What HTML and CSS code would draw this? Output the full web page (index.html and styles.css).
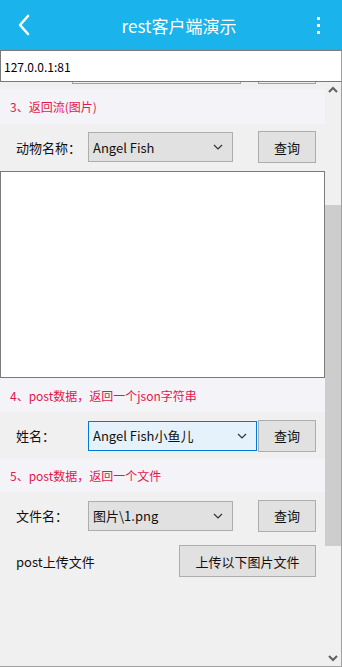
FILE: index.html
```html
<!DOCTYPE html>
<html lang="zh">
<head>
    <meta charset="UTF-8">
    <meta name="viewport" content="width=device-width, initial-scale=1.0">
    <title>rest客户端演示</title>
    <link rel="stylesheet" href="styles.css">
</head>
<body>
    <div class="topbar">
        <svg class="back" width="14" height="22" viewBox="0 0 14 22"><path d="M11 2 L3 11 L11 20" fill="none" stroke="#fff" stroke-width="2.6" stroke-linecap="round" stroke-linejoin="round"/></svg>
        <div class="title">rest客户端演示</div>
        <div class="dots"><span></span><span></span><span></span></div>
    </div>

    <div class="url">127.0.0.1:81</div>

    <div class="scroller">
        <div class="content">
            <div class="cutoff">
                <div class="cut-select"></div>
                <div class="cut-button"></div>
            </div>

            <div class="section s3">3、返回流(图片)</div>
            <div class="row r3">
                <div class="label">动物名称：</div>
                <div class="combo">Angel Fish
                    <svg width="10" height="6" viewBox="0 0 10 6"><path d="M1 1 L5 5 L9 1" fill="none" stroke="#333" stroke-width="1.2"/></svg>
                </div>
                <button class="button">查询</button>
            </div>
            <div class="picture"></div>

            <div class="section s4">4、post数据，返回一个json字符串</div>
            <div class="row r4">
                <div class="label">姓名：</div>
                <div class="combo combo-wide focused">Angel Fish小鱼儿
                    <svg width="10" height="6" viewBox="0 0 10 6"><path d="M1 1 L5 5 L9 1" fill="none" stroke="#333" stroke-width="1.2"/></svg>
                </div>
                <button class="button button-tight">查询</button>
            </div>

            <div class="section s5">5、post数据，返回一个文件</div>
            <div class="row r5">
                <div class="label">文件名：</div>
                <div class="combo">图片\1.png
                    <svg width="10" height="6" viewBox="0 0 10 6"><path d="M1 1 L5 5 L9 1" fill="none" stroke="#333" stroke-width="1.2"/></svg>
                </div>
                <button class="button">查询</button>
            </div>
            <div class="row upload">
                <div class="label label-free">post上传文件</div>
                <button class="button button-long">上传以下图片文件</button>
            </div>
        </div>

        <div class="scrollbar">
            <svg class="arrow" width="10" height="7" viewBox="0 0 10 7"><path d="M1 6 L5 2 L9 6" fill="none" stroke="#606060" stroke-width="2"/></svg>
            <div class="track"><div class="thumb"></div></div>
            <svg class="arrow" width="10" height="7" viewBox="0 0 10 7"><path d="M1 1 L5 5 L9 1" fill="none" stroke="#606060" stroke-width="2"/></svg>
        </div>
    </div>
</body>
</html>
```

FILE: styles.css
```css
body {
    margin: 0;
    width: 342px;
    height: 667px;
    background: #f0f0f0;
    font-family: "Noto Sans CJK SC", "Noto Sans", sans-serif;
    font-size: 13px;
    color: #111;
    overflow: hidden;
}
.topbar {
    height: 50px;
    background: #1ab3eb;
    display: flex;
    align-items: center;
    justify-content: space-between;
    padding: 0 22px 0 17px;
    color: white;
}
.title {
    font-size: 17px;
    margin-left: 10px;
}
.dots {
    display: flex;
    flex-direction: column;
    gap: 4px;
}
.dots span {
    width: 3px;
    height: 3px;
    background: white;
}
.url {
    height: 30px;
    background: white;
    border: 1px solid #7a7a7a;
    border-right-color: #a0a0a0;
    display: flex;
    align-items: center;
    padding-left: 3px;
    font-size: 12px;
    color: #000;
}
.scroller {
    height: 584px;
    display: flex;
    border-right: 1px solid #a0a0a0;
    border-bottom: 1px solid #a0a0a0;
}
.content {
    width: 325px;
    overflow: hidden;
}
.cutoff {
    height: 7px;
    position: relative;
}
.cut-select {
    position: absolute;
    left: 72px;
    top: 0;
    width: 167px;
    height: 1px;
    border: 1px solid #a0a0a0;
    border-top: none;
}
.cut-button {
    position: absolute;
    left: 258px;
    top: 0;
    width: 56px;
    height: 1px;
    border: 1px solid #a0a0a0;
    border-top: none;
}
.section {
    background: #f4f3f8;
    color: #e3174d;
    font-size: 12px;
    display: flex;
    align-items: center;
    padding-left: 10px;
}
.s3 { height: 35px; }
.s4 { height: 34px; }
.s5 { height: 33px; }
.row {
    display: flex;
    align-items: center;
    padding-left: 16px;
}
.r3 { height: 46px; }
.r4 { height: 47px; }
.r5 { height: 47px; }
.upload {
    height: 44px;
    padding-right: 9px;
}
.label {
    width: 72px;
    white-space: nowrap;
}
.label-free {
    width: auto;
    flex: 1;
}
.combo {
    height: 30px;
    background: #e1e1e1;
    border: 1px solid #adadad;
    display: flex;
    align-items: center;
    justify-content: space-between;
    padding: 0 9px 0 4px;
    box-sizing: border-box;
    width: 145px;
}
.combo-wide { width: 169px; }
.focused {
    background: #e5f1fb;
    border-color: #0078d7;
}
.button {
    font-family: inherit;
    font-size: 13px;
    color: #111;
    background: #e1e1e1;
    border: 1px solid #adadad;
    height: 32px;
    width: 58px;
    margin-left: 25px;
    padding: 0;
}
.button-tight { margin-left: 1px; }
.button-long {
    width: 137px;
    margin-left: 0;
}
.picture {
    height: 205px;
    margin-top: 1px;
    background: white;
    border: 1px solid #7a7a7a;
}
.scrollbar {
    width: 16px;
    display: flex;
    flex-direction: column;
    align-items: center;
}
.arrow {
    margin: 4px 0;
}
.track {
    flex: 1;
    width: 16px;
}
.thumb {
    margin-top: 108px;
    height: 341px;
    background: #cdcdcd;
}
```
